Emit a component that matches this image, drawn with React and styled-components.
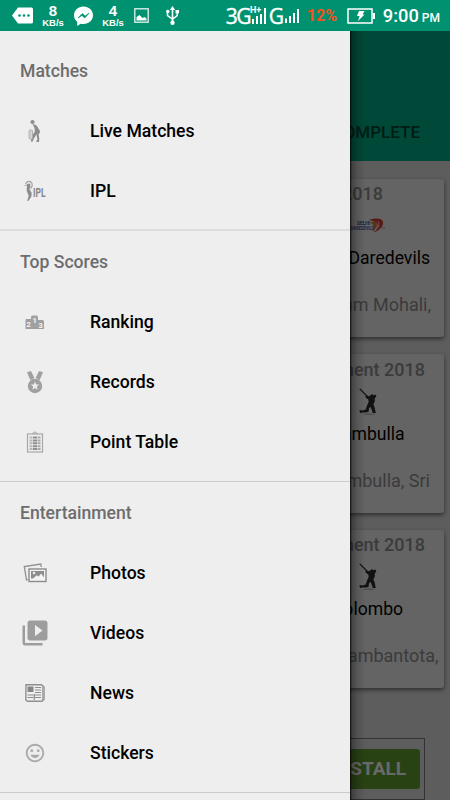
import styled, { createGlobalStyle } from "styled-components";
import { MdMood, MdVideoLibrary } from "react-icons/md";

const GlobalStyle = createGlobalStyle`
  * {
    box-sizing: border-box;
  }

  body {
    margin: 0;
    font-family: Roboto, "Liberation Sans", sans-serif;
  }
`;

const Screen = styled.div`
  width: 450px;
  height: 800px;
  display: flex;
  flex-direction: column;
  overflow: hidden;
  background: #bababa;
`;

const StatusBar = styled.header`
  height: 31px;
  flex-shrink: 0;
  display: flex;
  align-items: center;
  justify-content: space-between;
  padding: 0 10px 0 12px;
  background: #009270;
  color: #fff;
`;

const StatusGroup = styled.div`
  display: flex;
  align-items: center;
  height: 31px;
`;

const StatusItem = styled.div`
  display: flex;
  align-items: center;
  flex-shrink: 0;
  width: ${({ $width }) => $width}px;
  margin-right: ${({ $gap }) => $gap || 0}px;

  svg {
    display: block;
    overflow: visible;
  }
`;

const Speed = styled.div`
  width: 22px;
  margin-right: 10px;
  display: flex;
  flex-direction: column;
  align-items: center;
  font-family: "Liberation Sans", Arial, sans-serif;
  font-weight: bold;
  white-space: nowrap;
`;

const SpeedValue = styled.div`
  font-size: 15px;
  line-height: 14px;
`;

const SpeedUnit = styled.div`
  font-size: 9.5px;
  line-height: 10px;
`;

const Network = styled.span`
  font-family: "Open Sans", sans-serif;
  font-size: 21px;
  letter-spacing: ${({ $tight }) => ($tight ? "-1.5px" : "0")};
  -webkit-text-stroke: 0.4px #fff;
`;

const Percent = styled.span`
  font-size: 16px;
  font-weight: 700;
  color: #f4511e;
`;

const Clock = styled.span`
  font-size: 18.3px;
  font-weight: 500;
  white-space: nowrap;

  small {
    margin-left: 3px;
    font-size: 12px;
  }
`;

const Content = styled.div`
  position: relative;
  flex: 1;
  min-height: 0;
`;

const Toolbar = styled.div`
  height: 130px;
  display: flex;
  align-items: flex-end;
  justify-content: flex-end;
  padding: 0 30px 19px 0;
  background: #009270;
  color: #00382b;
  font-size: 17px;
  font-weight: 500;
  line-height: 20px;
`;

const CardList = styled.div`
  display: flex;
  flex-direction: column;
  gap: 17px;
  padding: 17.6px 6px 0;
`;

const Card = styled.article`
  height: 158.5px;
  padding-top: 4.5px;
  border-radius: 3px;
  background: #c8c8c8;
  box-shadow: 0 2px 4px rgba(0, 0, 0, 0.5);
  line-height: 22px;
`;

const CardLine = styled.div`
  text-align: right;
  padding-right: ${({ $right }) => $right}px;
  color: #777;
  font-size: 18px;
  font-weight: ${({ $bold }) => ($bold ? 500 : 400)};
`;

const Team = styled.div`
  width: 153px;
  margin: 0 0 25.3px auto;
  display: flex;
  flex-direction: column;
  align-items: center;
  color: #000;
  font-size: 17.6px;
  white-space: nowrap;
`;

const TeamLogo = styled.div`
  height: 42px;
  display: flex;
  align-items: center;
`;

const AdBanner = styled.div`
  width: 399px;
  height: 62px;
  margin: 49.6px 0 0 26px;
  padding: 10px 4px;
  display: flex;
  justify-content: flex-end;
  border: 1px solid #666;
`;

const InstallButton = styled.button`
  width: 104px;
  height: 40px;
  padding: 0 14px 0 0;
  border: none;
  border-radius: 3px;
  background: #528428;
  color: #d2d2d2;
  font-family: inherit;
  font-size: 19px;
  font-weight: 700;
  text-align: right;
`;

const Scrim = styled.div`
  position: absolute;
  inset: 0;
  background: rgba(0, 0, 0, 0.5);
`;

const Drawer = styled.nav`
  position: absolute;
  top: 0;
  bottom: 0;
  left: 0;
  width: 350px;
  padding-top: 9.6px;
  overflow: hidden;
  background: #eee;
`;

const DrawerShadow = styled.div`
  position: absolute;
  top: 0;
  bottom: 0;
  left: 350px;
  width: 16px;
  background: linear-gradient(
    to right,
    rgba(0, 0, 0, 0.85) 0,
    rgba(0, 0, 0, 0.32) 2px,
    rgba(0, 0, 0, 0.12) 8px,
    transparent
  );
`;

const Section = styled.section`
  padding-bottom: ${({ $first }) => ($first ? 8.4 : 9)}px;
`;

const Divider = styled.div`
  height: ${({ $thick }) => ($thick ? 2 : 1)}px;
  margin-bottom: ${({ $thick }) => ($thick ? 0.8 : 1.4)}px;
  background: ${({ $thick }) => ($thick ? "#dcdcdc" : "#cbcbcb")};
`;

const SectionTitle = styled.h2`
  height: 60px;
  margin: 0;
  padding-left: 20px;
  color: #6d6d6d;
  font-size: 17.6px;
  font-weight: 500;
  line-height: 60px;
`;

const MenuItem = styled.a`
  height: 60px;
  display: grid;
  grid-template-columns: 50px 1fr;
  gap: 30px;
  align-items: center;
  padding-left: 10px;
  color: #000;
  font-size: 17.6px;
  font-weight: 500;
`;

const MenuIcon = styled.span`
  display: flex;
  justify-content: center;
  color: #9d9d9d;

  svg {
    overflow: visible;
  }
`;

const IconText = styled.text`
  font-family: Roboto, sans-serif;
  font-weight: 700;
`;

function Signal() {
  return (
    <svg width="15" height="15" viewBox="0 0 15 15" fill="#fff">
      <path d="M0 10.500h2v4.500H0zM4 8h2v7H4zM8 5h2v10H8zM12 1h2v14h-2z" />
    </svg>
  );
}

// player walking with a bat and pads
function BatsmanIcon() {
  return (
    <svg width="14" height="24" viewBox="0 0 14 24">
      <circle cx="4.500" cy="3" r="2.100" fill="#8c8c8c" />
      <path
        d="M4.500 5.300c2.500-.3 4.500 1.200 5.200 3l2.600 4.200-1.700 3 .7 4.500-.3 3H8.300l.3-1.500.9-.7-1.200-5.500-2.500 4.500-1.300 3-1.700-.3 1.500-6 2.500-4-.3-3.500z"
        fill="#8c8c8c"
      />
      <rect x="1" y="11" width="3.500" height="9" rx="1" fill="#dedede" stroke="#aaa" strokeWidth=".9" />
      <path d="M2.700 11.500v8" stroke="#b5b5b5" strokeWidth=".7" />
    </svg>
  );
}

function IplIcon() {
  return (
    <svg width="22" height="22" viewBox="0 0 22 22">
      <path d="M1.500 4C3 1 6.500.3 8 3.500c.8 2.500-.3 4-1 5" fill="none" stroke="#a3a3a3" strokeWidth="1.200" />
      <path d="M.5 5.500l4-.5" stroke="#aaa" strokeWidth=".9" />
      <path
        d="M3 4l3-.5.5 3.500-1 2 2.200 4-.3 3.500-3 4.500-1.200-.3 1.500-5-2-5z"
        fill="#8c8c8c"
      />
      <IconText x="9" y="16.500" fontSize="13" textLength="12.500" lengthAdjust="spacingAndGlyphs" fill="#868686">
        IPL
      </IconText>
    </svg>
  );
}

function RankingIcon() {
  return (
    <svg width="20" height="16" viewBox="0 0 20 16">
      <path
        d="M1.500 5H6V3a1.500 1.500 0 0 1 1.500-1.500h4A1.500 1.500 0 0 1 13 3v3h4.500A1.500 1.500 0 0 1 19 7.500V15H.500V6A1 1 0 0 1 1.500 5z"
        fill="#a0a0a0"
      />
      <g fill="#f6f6f6" fontSize="7.500">
        <IconText x="1.500" y="12.500">2</IconText>
        <IconText x="7.500" y="8.800">1</IconText>
        <IconText x="13.500" y="13.500">3</IconText>
      </g>
    </svg>
  );
}

function MedalIcon() {
  return (
    <svg width="18" height="24" viewBox="0 0 18 24" fill="#a0a0a0">
      <path d="M1 2.200L5 1l3.400 7-4 2.300zM17 2.200L13 1 9.600 8l4 2.300z" />
      <circle cx="9" cy="16" r="7.200" />
      <path
        d="M9 11.500l1.100 3 3.200.1-2.500 2 .9 3.100L9 17.900l-2.700 1.800.9-3.100-2.500-2 3.200-.1z"
        fill="#eee"
      />
    </svg>
  );
}

function TableIcon() {
  return (
    <svg width="18" height="22" viewBox="0 0 18 22">
      <path d="M6 2.500h1.500c0-2 3-2 3 0H12" fill="none" stroke="#aaa" strokeWidth="1.200" />
      <rect x="1.500" y="3" width="15" height="18" fill="none" stroke="#a8a8a8" strokeWidth="1.200" />
      <g strokeDasharray="2 .9" strokeWidth="3">
        <path d="M5 5.500v13.500" stroke="#b8b8b8" />
        <path d="M9 5.500v13.500" stroke="#8f8f8f" strokeWidth="4" />
        <path d="M13 5.500v13.500" stroke="#aaa" />
      </g>
    </svg>
  );
}

function PhotosIcon() {
  return (
    <svg width="24" height="22" viewBox="0 0 24 22">
      <path d="M5 17.500L3.500 18 1.300 4.500 17.800 2l.5 3" fill="none" stroke="#8f8f8f" strokeWidth="1.300" />
      <rect x="6" y="7" width="17" height="12.500" fill="#f3f3f3" stroke="#8b8b8b" strokeWidth="1.400" />
      <path
        d="M8 9h13v6.500l-2.800-4-2.700 3-1.800-1.300L10 16.500H8z"
        fill="#8c8c8c"
      />
      <circle cx="11" cy="11" r="1.300" fill="#eee" />
    </svg>
  );
}

function NewsIcon() {
  return (
    <svg width="20" height="18" viewBox="0 0 20 18">
      <path d="M1 .8h15.500L19 3v12.500l-2 1.700H2.500L.8 16z" fill="#efefef" stroke="#8f8f8f" strokeWidth="1.400" />
      <path d="M17.500 2v14" stroke="#aaa" strokeWidth="1.200" />
      <path d="M2.500 2.500h6v5.500h-6z" fill="#868686" />
      <path
        d="M10 3.500h6M10 6h6M10 8.500h6M2.500 11h6M2.500 13.500h6M10 11h6M10 13.500h6M9.300 10v6"
        stroke="#8f8f8f"
        strokeWidth="1.200"
      />
    </svg>
  );
}

function DaredevilsLogo() {
  return (
    <svg width="38" height="16" viewBox="2 0 38 16">
      <path d="M22 2c5-2 13-2.500 14 2 .5 5-4 9-10 10.500 4-3 6-6.500 4.500-9-2-2.500-5-2.500-8.500-3.500z" fill="#b03028" />
      <path d="M23 4.500c4-2 8-1 7 3-.8 2.500-2.500 4.500-5 6 2.500-4.500 2-7.500-2-9z" fill="#b5652c" />
      <path d="M31 3c2.200 3 1 7-2.500 9.500" fill="none" stroke="#c4b2a8" strokeWidth=".9" />
      <g fill="#3c4a80">
        <IconText x="10" y="7" fontSize="5" textLength="13">
          DELHI
        </IconText>
        <IconText x="4" y="11.500" fontSize="5.500" textLength="23" lengthAdjust="spacingAndGlyphs">
          DAREDEVILS
        </IconText>
      </g>
      <path d="M35 10h3" stroke="#a74f48" strokeWidth=".7" />
    </svg>
  );
}

// batsman on one knee, bat raised behind the shoulder
function CricketerLogo() {
  return (
    <svg width="18" height="28" viewBox="0 0 18 28" fill="#242424">
      <ellipse cx="10" cy="26.300" rx="6" ry=".8" fill="#9a9a9a" />
      <path d="M.3 1.200L1.300.5l6 6L9 8l-1 1-1.500-1.500z" />
      <path d="M6.500 7.800l3.500.5 2-1.500 1.300-.5 1.500 1 1.700-.8.9 1.800-1.600 2.200v3l-1.500 3 1.200 2.500 1.300 6h-3.200l-.2-1.500-1.800-4.500-1.500 1-.6 4-2.500.6H3.500L1 25 .5 22l3 .5 3.200-1 1.500-4.500 1.500-3-.4-2.500-2.800-2z" />
    </svg>
  );
}

const MATCHES = [
  {
    title: "League 2018",
    titleRight: 61,
    logo: "daredevils",
    team: "Delhi Daredevils",
    venue: "Stadium Mohali,",
    venueRight: 13,
  },
  {
    title: "Tournament 2018",
    titleRight: 19,
    logo: "cricketer",
    team: "Dambulla",
    venue: "Dambulla, Sri",
    venueRight: 14,
  },
  {
    title: "Tournament 2018",
    titleRight: 19,
    logo: "cricketer",
    team: "Colombo",
    venue: "Hambantota,",
    venueRight: 5.5,
  },
];

const SECTIONS = [
  {
    title: "Matches",
    items: [
      { label: "Live Matches", icon: <BatsmanIcon /> },
      { label: "IPL", icon: <IplIcon /> },
    ],
  },
  {
    title: "Top Scores",
    items: [
      { label: "Ranking", icon: <RankingIcon /> },
      { label: "Records", icon: <MedalIcon /> },
      { label: "Point Table", icon: <TableIcon /> },
    ],
  },
  {
    title: "Entertainment",
    items: [
      { label: "Photos", icon: <PhotosIcon /> },
      { label: "Videos", icon: <MdVideoLibrary size={30} /> },
      { label: "News", icon: <NewsIcon /> },
      { label: "Stickers", icon: <MdMood size={22} color="#aaa" /> },
    ],
  },
];

function StatusIcons() {
  return (
    <StatusBar>
      <StatusGroup>
        <StatusItem $width={21} $gap={9}>
          <svg width="21" height="17" viewBox="0 0 21 17">
            <path d="M6 .5h13.500A1.500 1.500 0 0 1 21 2v13a1.500 1.500 0 0 1-1.500 1.500H6L0 8.500z" fill="#fff" />
            <g fill="#009270">
              <circle cx="7.500" cy="8.500" r="1.300" />
              <circle cx="12" cy="8.500" r="1.300" />
              <circle cx="16.500" cy="8.500" r="1.300" />
            </g>
          </svg>
        </StatusItem>
        <Speed>
          <SpeedValue>8</SpeedValue>
          <SpeedUnit>KB/s</SpeedUnit>
        </Speed>
        <StatusItem $width={19} $gap={9}>
          <svg width="19" height="20" viewBox="0 0 19 20">
            <path
              d="M9.500.5C4.200.5 0 4.300 0 9.200c0 2.700 1.200 5 3.200 6.500V20l3.500-2.300c.9.200 1.800.3 2.800.3 5.300 0 9.500-3.900 9.500-8.800S14.800.5 9.500.5z"
              fill="#fff"
            />
            <path d="M4 12l4.300-4.500 2.800 2.600 4-3-4.300 4.800-2.800-2.500z" fill="#009270" stroke="#009270" strokeWidth=".7" />
          </svg>
        </StatusItem>
        <Speed>
          <SpeedValue>4</SpeedValue>
          <SpeedUnit>KB/s</SpeedUnit>
        </Speed>
        <StatusItem $width={15} $gap={17}>
          <svg width="15" height="15" viewBox="0 0 15 15">
            <rect x=".8" y=".8" width="13.400" height="13.400" fill="none" stroke="#e5f4f0" strokeWidth="1.300" />
            <path d="M2.500 12.500V9l3-2 3 3 2-1 2 1.500v2z" fill="#fff" />
          </svg>
        </StatusItem>
        <StatusItem $width={13}>
          <svg width="13" height="19" viewBox="0 0 13 19" fill="#fff">
            <path d="M6.500 0l2.700 4H3.800zM5.700 3h1.600v13H5.700z" />
            <path d="M1.500 6v3.500l5 3.500 4.700-3.500V6" fill="none" stroke="#fff" strokeWidth="1.500" />
            <circle cx="1.800" cy="5.500" r="1.700" />
            <path d="M9.500 4H13v3.300H9.500z" />
            <circle cx="6.500" cy="16.700" r="2.200" />
          </svg>
        </StatusItem>
      </StatusGroup>
      <StatusGroup>
        <StatusItem $width={25}>
          <Network $tight>3G</Network>
        </StatusItem>
        <StatusItem $width={15} $gap={3}>
          <svg width="15" height="19" viewBox="0 0 15 19" fill="#fff">
            <IconText x="-1" y="6.500" fontSize="9">
              H+
            </IconText>
            <path d="M1 13h2v5H1zM5 10h2v8H5zM9 8h2v10H9zM13 2h2v16h-2z" />
          </svg>
        </StatusItem>
        <StatusItem $width={16}>
          <Network>G</Network>
        </StatusItem>
        <StatusItem $width={15} $gap={7}>
          <Signal />
        </StatusItem>
        <StatusItem $width={30} $gap={10}>
          <Percent>12%</Percent>
        </StatusItem>
        <StatusItem $width={28} $gap={8}>
          <svg width="28" height="16" viewBox="0 0 28 16">
            <path d="M1 1h24v14H1z" fill="none" stroke="#fff" strokeWidth="1.500" />
            <path d="M26 5h2v6h-2z" fill="#fff" />
            <path d="M12 3h5.500l-2 3.500h2L11 13l1.500-5H10z" fill="#fff" />
          </svg>
        </StatusItem>
        <Clock>
          9:00<small>PM</small>
        </Clock>
      </StatusGroup>
    </StatusBar>
  );
}

function MatchCard({ match }) {
  return (
    <Card>
      <CardLine $bold $right={match.titleRight}>
        {match.title}
      </CardLine>
      <Team>
        <TeamLogo>
          {match.logo === "daredevils" ? (
            <DaredevilsLogo />
          ) : (
            <CricketerLogo />
          )}
        </TeamLogo>
        {match.team}
      </Team>
      <CardLine $right={match.venueRight}>{match.venue}</CardLine>
    </Card>
  );
}

function App() {
  return (
    <>
      <GlobalStyle />
      <Screen>
        <StatusIcons />
        <Content>
          <Toolbar>COMPLETE</Toolbar>
          <CardList>
            {MATCHES.map((match) => (
              <MatchCard key={match.team} match={match} />
            ))}
          </CardList>
          <AdBanner>
            <InstallButton>INSTALL</InstallButton>
          </AdBanner>
          <Scrim />
          <DrawerShadow />
          <Drawer>
            {SECTIONS.map((section, index) => (
              <div key={section.title}>
                <Section $first={index === 0}>
                  <SectionTitle>{section.title}</SectionTitle>
                  {section.items.map((item) => (
                    <MenuItem key={item.label}>
                      <MenuIcon>{item.icon}</MenuIcon>
                      {item.label}
                    </MenuItem>
                  ))}
                </Section>
                <Divider $thick={index === 0} />
              </div>
            ))}
          </Drawer>
        </Content>
      </Screen>
    </>
  );
}

export default App;
